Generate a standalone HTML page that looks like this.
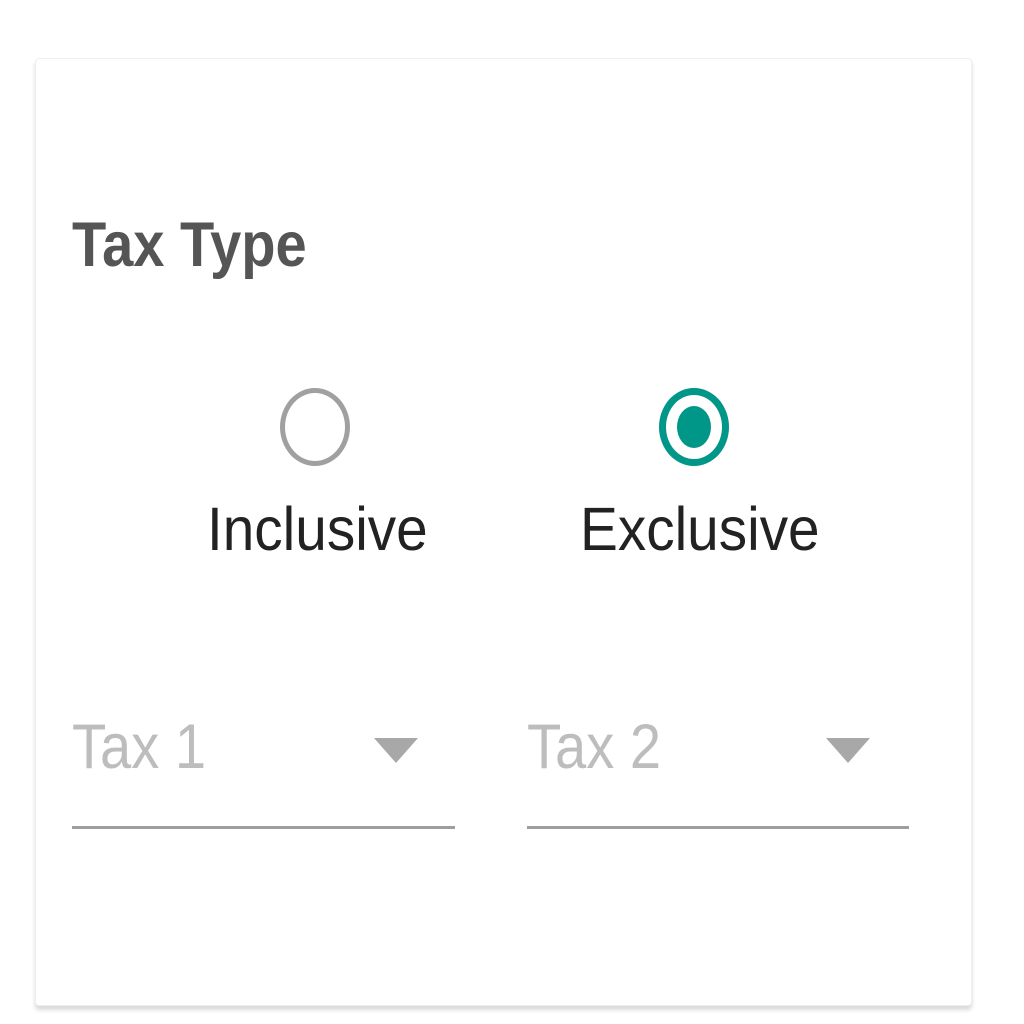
<!DOCTYPE html>
<html><head><style>
html,body{margin:0;padding:0;background:#fff;width:1024px;height:1024px;overflow:hidden;font-family:"Liberation Sans",sans-serif}
.card{position:absolute;left:35px;top:58px;width:935px;height:946px;border:1px solid #eee;border-radius:4px;box-shadow:0 4px 4px rgba(0,0,0,.15);background:#fff}
.t{position:absolute;white-space:nowrap;transform-origin:0 0;line-height:1}
.r{position:absolute;width:70px;height:78px;border-radius:50%;box-sizing:border-box}
.line{position:absolute;height:3px;background:#9e9e9e;top:826px}
.tri{position:absolute;width:0;height:0;border-left:22px solid transparent;border-right:22px solid transparent;border-top:25px solid #a8a8a8;top:738px}
</style></head><body>
<div class="card"></div>
<div class="t" style="left:72px;top:214px;font-size:63px;font-weight:bold;color:#555;transform:scaleX(.89)">Tax Type</div>
<div class="r" style="left:280px;top:388px;border:5px solid #a0a0a0"></div>
<div class="r" style="left:659px;top:388px;border:7px solid #009688"></div>
<div style="position:absolute;left:677px;top:406px;width:34px;height:42px;border-radius:50%;background:#009688"></div>
<div class="t" style="left:207px;top:499px;font-size:61px;color:#222;transform:scaleX(.93)">Inclusive</div>
<div class="t" style="left:580px;top:499px;font-size:61px;color:#222;transform:scaleX(.93)">Exclusive</div>
<div class="t" style="left:72px;top:716px;font-size:63px;color:#bdbdbd;transform:scaleX(.89)">Tax 1</div>
<div class="t" style="left:527px;top:716px;font-size:63px;color:#bdbdbd;transform:scaleX(.89)">Tax 2</div>
<div class="tri" style="left:374px"></div>
<div class="tri" style="left:826px"></div>
<div class="line" style="left:72px;width:383px"></div>
<div class="line" style="left:527px;width:382px"></div>
</body></html>
